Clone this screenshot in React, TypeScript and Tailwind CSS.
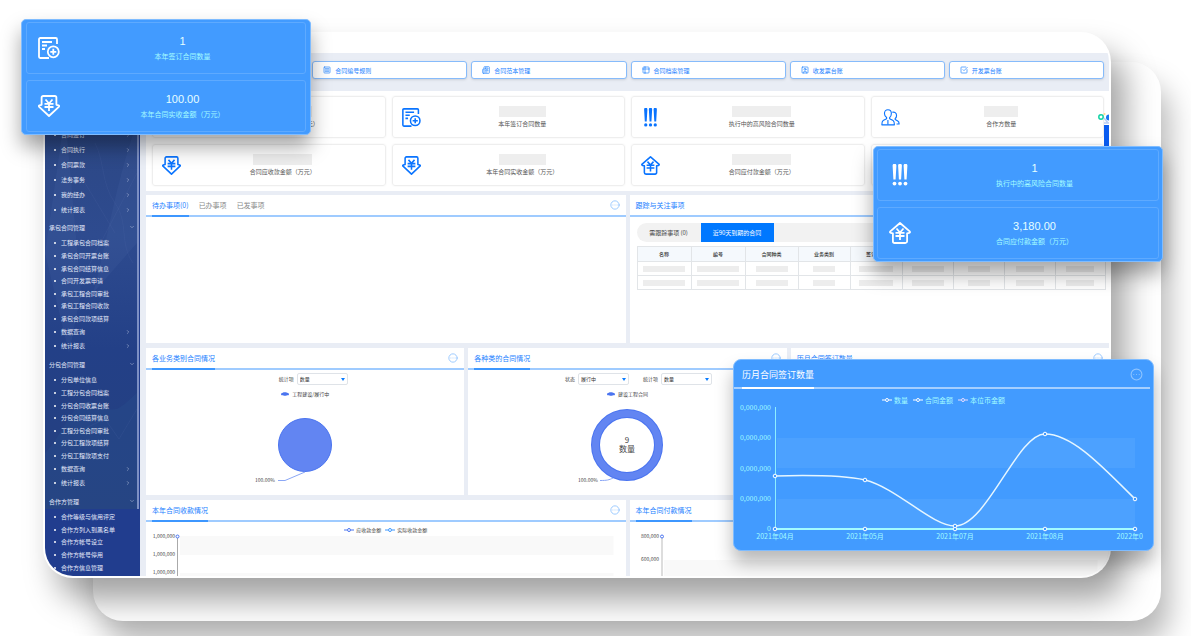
import { CircleEllipsis, ChevronDown, ChevronRight, Newspaper, SquareCheckBig, SquareMenu, SquareUser, Table2 } from 'lucide-react'
import type { ReactNode } from 'react'

type IconProps = { className?: string }

const ContractIcon = ({ className }: IconProps) => (
  <svg viewBox="0 0 22 22" fill="none" stroke="currentColor" strokeWidth="1.8" className={className}>
    <path d="M19 7V2.200A1.200 1.200 0 0 0 17.800 1H2.200A1.200 1.200 0 0 0 1 2.200v17.600A1.200 1.200 0 0 0 2.200 21H11" />
    <path d="M4 5h10M4 8.500h5M4 12h3" />
    <circle cx="15.300" cy="14.800" r="5.500" />
    <path d="M12.300 14.800h6M15.300 11.800v6" />
  </svg>
)

const IncomeIcon = ({ className }: IconProps) => (
  <svg viewBox="0 0 22 22" fill="none" stroke="currentColor" strokeWidth="1.800" strokeLinejoin="round" className={className}>
    <path d="M5.200 1h11.600a1.600 1.600 0 0 1 1.600 1.600v7.200l2.200.5c.7.3.7 1 .2 1.500L11 21 1.200 11.800c-.5-.5-.5-1.200.2-1.500l2.200-.5V2.600A1.600 1.600 0 0 1 5.200 1z" />
    <path d="M7.500 4.500 11 8.500l3.500-4M6.500 8.800h9M6.500 12h9M11 8.500v7.500" />
  </svg>
)

const OutcomeIcon = ({ className }: IconProps) => (
  <svg viewBox="0 0 22 22" fill="none" stroke="currentColor" strokeWidth="1.800" strokeLinejoin="round" className={className}>
    <path d="M11 1 1.300 9.400c-.6.6-.4 1.400.4 1.500l2.200.4v7.900A1.800 1.800 0 0 0 5.700 21h10.600a1.800 1.800 0 0 0 1.800-1.800v-7.900l2.200-.4c.8-.1 1-.9.4-1.500z" />
    <path d="M7.500 6.500 11 10.500l3.500-4M6.500 10.800h9M6.500 14h9M11 10.500v7.500" />
  </svg>
)

const RiskIcon = ({ className }: IconProps) => (
  <svg viewBox="0 0 22 22" fill="currentColor" className={className}>
    <path d="M3.600 1.600a1.900 1.900 0 0 1 3.800 0L6.600 15.500H4.400zM9.100 1.600a1.900 1.900 0 0 1 3.800 0l-.8 13.900H9.900zM14.600 1.600a1.900 1.900 0 0 1 3.800 0l-.8 13.900h-2.200z" />
    <circle cx="5.500" cy="19.600" r="1.900" />
    <circle cx="11" cy="19.600" r="1.900" />
    <circle cx="16.500" cy="19.600" r="1.900" />
  </svg>
)

const PartnerIcon = ({ className }: IconProps) => (
  <svg viewBox="0 0 22 22" fill="none" stroke="currentColor" strokeWidth="1.300" strokeLinejoin="round" className={className}>
    <path d="M8 2c2.500 0 4 2 4 4.500 0 2-.8 3.700-2 4.500v1.500l4 2c1 .6 1.500 2 1.500 5H1c0-3 .5-4.400 1.500-5l4-2V11C5 10 4 8.500 4 6.500 4 4 5.500 2 8 2z" />
    <path d="M13 5c2.600-1 5 .8 5 3.600 0 1.600-.6 2.900-1.600 3.600v1.200l3 1.600c1.200.7 1.600 1.700 1.600 3.500h-3" />
    <path d="M8 14v5" />
  </svg>
)

const menus = [
  { title: '', items: ['合同签订', '合同执行', '合同票款', '法务事务', '我的经办', '统计报表'] },
  { title: '承包合同管理', items: ['工程承包合同档案', '承包合同开票台账', '承包合同结算信息', '合同开发票申请', '承包工程合同审批', '承包工程合同收款', '承包合同款项结算', '数据查询', '统计报表'] },
  { title: '分包合同管理', items: ['分包单位信息', '工程分包合同档案', '分包合同收票台账', '分包合同结算信息', '工程分包合同审批', '分包工程款项结算', '分包工程款项支付', '数据查询', '统计报表'] },
  { title: '合作方管理', items: ['合作等级与信用评定', '合作方列入到黑名单', '合作方帐号设立', '合作方帐号停用', '合作方信息管理'] },
]

const menuHeights = ['h-[89px]', 'h-[117px]', 'h-[117px]', 'h-[63px]']

const shortcuts = [
  { icon: SquareMenu, label: '合同编号规则' },
  { icon: Newspaper, label: '合同范本管理' },
  { icon: Table2, label: '合同档案管理' },
  { icon: SquareUser, label: '收发票台账' },
  { icon: SquareCheckBig, label: '开发票台账' },
]

const stats = [
  { icon: null, label: '本年签订合同金额（万元）', bar: 'w-[59px]' },
  { icon: ContractIcon, label: '本年签订合同数量', bar: 'w-[47px]' },
  { icon: RiskIcon, label: '执行中的高风险合同数量', bar: 'w-[59px]' },
  { icon: PartnerIcon, label: '合作方数量', bar: 'w-[34px]' },
  { icon: IncomeIcon, label: '合同应收款金额（万元）', bar: 'w-[59px]' },
  { icon: IncomeIcon, label: '本年合同实收金额（万元）', bar: 'w-[47px]' },
  { icon: OutcomeIcon, label: '合同应付款金额（万元）', bar: 'w-[59px]' },
  { icon: null, label: '', bar: 'w-0' },
]

const columns = [
  { label: '名称', col: 'w-[54px]', bar: 'w-[42px]' },
  { label: '编号', col: 'w-[54px]', bar: 'w-[42px]' },
  { label: '合同种类', col: 'w-[53px]', bar: 'w-[32px]' },
  { label: '业务类别', col: 'w-[52px]', bar: 'w-[22px]' },
  { label: '签订日期', col: 'w-[52px]', bar: 'w-[34px]' },
  { label: '', col: 'w-[51px]', bar: 'w-[32px]' },
  { label: '', col: 'w-[51px]', bar: 'w-[22px]' },
  { label: '', col: 'w-[51px]', bar: 'w-[28px]' },
  { label: '', col: 'w-[50px]', bar: 'w-[28px]' },
]

const Sidebar = () => (
  <nav className="flex w-[95px] shrink-0 bg-[#213d8e] text-[#e4eafa]">
    <div className="relative w-[92px] overflow-hidden pt-[75px]">
      <svg className="absolute inset-x-0 top-0 h-[456px] w-full" viewBox="0 0 92 456" preserveAspectRatio="none">
        <defs>
          <linearGradient id="side" x1="0" y1="0" x2="0" y2="1">
            <stop offset="0.15" stopColor="#2c4784" />
            <stop offset="0.4" stopColor="#2e4b8f" />
            <stop offset="0.65" stopColor="#234087" />
            <stop offset="1" stopColor="#25407f" />
          </linearGradient>
        </defs>
        <rect width="92" height="456" fill="url(#side)" />
        <path d="M92 70C70 130 60 200 48 240L92 190zM20 60l16 180-12 60L0 200z" fill="#4763a3" opacity=".2" />
        <path d="M0 400c20-20 30-60 50-50s20 10 42-10v116H0z" fill="#2c5a94" opacity=".2" />
        <path d="M50 90c10 20 6 40 20 60s4 40 18 60M40 130l30 50M92 120L40 220M30 380l30-14 14 20 18-30" stroke="#6d86bd" strokeWidth=".5" fill="none" opacity=".2" />
      </svg>
      {menus.map((menu, i) => (
        <div key={i} className="relative">
          {menu.title && (
            <button className="flex h-[20px] w-full items-center justify-between pr-[2px] pl-[4px] text-[6px]">
              {menu.title}
              <ChevronDown size={6} strokeWidth={1.5} />
            </button>
          )}
          <ul className={`flex flex-col ${menuHeights[i]}`}>
            {menu.items.map((item, n) => (
              <li key={item} className={`flex items-center ${n === 8 ? 'h-[16px]' : 'flex-1'}`}>
                <a href="#" className="flex w-full items-center pr-[6px] pl-[9px] text-[6px] leading-[8px]">
                  <span className="mr-[5px] size-[2px] rounded-full bg-white" />
                  {item}
                  {item.length === 4 && <ChevronRight size={6} strokeWidth={1.5} className="ml-auto" />}
                </a>
              </li>
            ))}
          </ul>
        </div>
      ))}
    </div>
    <div className="h-[456px] w-[2px] bg-[#7d90c4]" />
  </nav>
)

const MoreButton = () => (
  <button aria-label="更多" className="ml-auto text-[#8cc2ff]">
    <CircleEllipsis size={10} strokeWidth={2} />
  </button>
)

type PanelProps = { title?: string; tabs?: ReactNode; className?: string; children?: ReactNode }

const Panel = ({ title, tabs, className, children }: PanelProps) => (
  <section className={`min-w-0 overflow-hidden bg-white ${className}`}>
    <header className="flex h-[22px] items-center border-b-2 border-[#9fcbff] px-[6px] text-[7px] text-[#1a80ff]">
      {tabs ?? <h2 className="-mb-[2px] flex h-[22px] items-center border-b-2 border-[#3d97ff]">{title}</h2>}
      <MoreButton />
    </header>
    {children}
  </section>
)

const Select = ({ label, value }: { label: string; value: string }) => (
  <label className="flex items-center gap-[3px] text-[5px] text-[#444]">
    {label}
    <span className="relative">
      <select className="block h-[12px] w-[51px] appearance-none rounded-[2px] border border-[#dfe3e8] bg-white pl-[2px] text-[5px] leading-[10px] text-[#333]">
        <option>{value}</option>
      </select>
      <span className="absolute top-[5px] right-[3px] border-x-2 border-t-[3px] border-x-transparent border-t-[#0a7cff]" />
    </span>
  </label>
)

const PieLegend = ({ children }: { children: ReactNode }) => (
  <p className="mt-[4px] flex h-[10px] items-center justify-center gap-[3px] text-[5px] text-[#444]">
    <svg width="8" height="4" viewBox="0 0 8 4" fill="#4a74f0">
      <path d="M0 2.200C0 1.200 1 1 1.800.8 2.400 0 5.600 0 6.200.8 7 1 8 1.200 8 2.200S7 3.400 6 3.300C5 4 3 4 2 3.300 1 3.400 0 3.200 0 2.200z" />
    </svg>
    {children}
  </p>
)

const LineLegend = ({ color, label }: { color: string; label: string }) => (
  <span className="flex items-center gap-[2px]">
    <svg width="10" height="4" viewBox="0 0 10 4" fill="none" stroke={color}>
      <path d="M0 2h3M7 2h3" />
      <circle cx="5" cy="2" r="1.5" />
    </svg>
    {label}
  </span>
)

const TodoTabs = () => (
  <div className="-mb-[2px] flex h-[22px] gap-[10px] text-[#888]">
    <button className="border-b-2 border-[#3d97ff] text-[#1a80ff]">待办事项(0)</button>
    <button className="border-b-2 border-transparent">已办事项</button>
    <button className="border-b-2 border-transparent">已发事项</button>
  </div>
)

const FollowTable = () => (
  <div className="pt-[6px] pr-[5px] pl-[7px]">
    <div className="flex h-[19px] overflow-hidden rounded-l-full bg-[#f2f2f2] text-[6px]">
      <button className="w-[64px] text-[#444]">需跟踪事项 (0)</button>
      <button className="w-[73px] bg-[#0078ff] text-white">近90天到期的合同</button>
    </div>
    <table className="mt-[4px] w-full table-fixed border-collapse text-[5px] text-[#333]">
      <thead>
        <tr className="h-[15px] bg-[#f5f9fd]">
          {columns.map((c, i) => (
            <th key={i} className={`border border-[#e2e5e8] p-0 leading-[8px] font-medium ${c.col}`}>{c.label}</th>
          ))}
        </tr>
      </thead>
      <tbody>
        {[0, 1].map((row) => (
          <tr key={row} className="h-[14px]">
            {columns.map((c, i) => (
              <td key={i} className="border border-[#e2e5e8] p-0">
                <div className={`mx-auto h-[6px] bg-[#ededed] ${c.bar}`} />
              </td>
            ))}
          </tr>
        ))}
      </tbody>
    </table>
  </div>
)

const Dashboard = () => (
  <main className="relative min-w-0 flex-1 bg-[#e9edf5] pl-[6px]">
    <div className="grid grid-cols-6 gap-[4px] pt-[8px] pr-[5px] pb-[12px] pl-[7px]">
      {shortcuts.map(({ icon: Icon, label }) => (
        <button key={label} className="flex h-[18px] items-center gap-[4px] rounded-[3px] border border-[#86bbfb] bg-white pl-[10px] text-[6px] text-[#1a80ff] shadow-sm first:col-start-2">
          <Icon size={8} strokeWidth={2} />
          {label}
        </button>
      ))}
    </div>

    <div className="grid grid-cols-4 gap-[6px] bg-white py-[5px] pr-[5px] pl-[6px]">
      {stats.map(({ icon: Icon, label, bar }, i) => (
        <div key={i} className="flex h-[42px] items-center rounded-[3px] border border-[#eeeeee] shadow-[0_0_2px_#f0f0f0]">
          <div className="ml-[9px] w-[19px] text-[#0a74ff]">{Icon && <Icon className="size-[19px]" />}</div>
          <div className="flex flex-1 flex-col items-center gap-[2px]">
            <div className={`h-[11px] bg-[#eeeeee] ${bar}`} />
            <p className="text-[6px] leading-[10px] text-[#555]">{label}</p>
          </div>
        </div>
      ))}
    </div>

    <div className="mt-[4px] grid grid-cols-2 gap-[4px]">
      <Panel tabs={<TodoTabs />} className="h-[148px]" />
      <Panel tabs={<h2>跟踪与关注事项</h2>} className="h-[148px]">
        <FollowTable />
      </Panel>
    </div>

    <div className="mt-[5px] grid grid-cols-3 gap-[4px]">
      <Panel title="各业务类别合同情况" className="h-[147px]">
        <div className="flex justify-center pt-[3px] pl-[16px]">
          <Select label="统计项" value="数量" />
        </div>
        <PieLegend>工程建设/履行中</PieLegend>
        <svg width="120" height="90" viewBox="0 0 120 90" className="mx-auto">
          <circle cx="60" cy="46" r="26.5" fill="#6285f2" stroke="#4a74f0" />
          <path d="M60 73 40 81.5h-7" fill="none" stroke="#8ba7f5" />
          <text x="10" y="83" fontSize="5" fill="#444">100.00%</text>
        </svg>
      </Panel>
      <Panel title="各种类的合同情况" className="h-[147px]">
        <div className="flex justify-center gap-[14px] pt-[3px] pl-[22px]">
          <Select label="状态" value="履行中" />
          <Select label="统计项" value="数量" />
        </div>
        <PieLegend>建设工程合同</PieLegend>
        <svg width="120" height="90" viewBox="0 0 120 90" className="mx-auto">
          <circle cx="60" cy="46" r="31.5" fill="none" stroke="#4a74f0" strokeWidth="9" />
          <circle cx="60" cy="46" r="31.5" fill="none" stroke="#6285f2" strokeWidth="7" />
          <text x="60" y="44" fontSize="8" textAnchor="middle" fill="#444">9</text>
          <text x="60" y="53" fontSize="8" textAnchor="middle" fill="#444">数量</text>
          <path d="M46 79c-4 2-6 2.5-13 2.5" fill="none" stroke="#8ba7f5" />
          <text x="11" y="83" fontSize="5" fill="#444">100.00%</text>
        </svg>
      </Panel>
      <Panel title="历月合同签订数量" className="h-[147px]" />
    </div>

    <div className="mt-[5px] grid grid-cols-2 gap-[4px]">
      <Panel title="本年合同收款情况" className="h-[76px]">
        <div className="flex h-[14px] items-center justify-center gap-[4px] pt-[2px] text-[5px] text-[#444]">
          <LineLegend color="#4a74f0" label="应收款金额" />
          <LineLegend color="#3d97ff" label="实际收款金额" />
        </div>
        <svg className="h-[40px] w-full overflow-visible" fontSize="5" fill="#444" textAnchor="end">
          <rect x="34" width="90.4%" height="19" fill="#f9f9f9" />
          <rect x="34" y="37" width="90.4%" height="3" fill="#f9f9f9" />
          <path d="M31.5 0v40" stroke="#aaa" />
          <circle cx="31.5" cy="0.5" r="1.5" fill="#fff" stroke="#4a74f0" />
          <text x="29" y="2">1,000,000</text>
          <text x="29" y="20">1,000,000</text>
          <text x="29" y="38">1,000,000</text>
        </svg>
      </Panel>
      <Panel title="本年合同付款情况" className="h-[76px]">
        <svg className="mt-[14px] h-[40px] w-full overflow-visible" fontSize="5" fill="#444" textAnchor="end">
          <rect x="34" y="24" width="90.4%" height="16" fill="#f9f9f9" />
          <path d="M32 0v40" stroke="#bbb" />
          <circle cx="32" cy="0.5" r="1.5" fill="#fff" stroke="#4a74f0" />
          <text x="29" y="2">800,000</text>
          <text x="29" y="25">600,000</text>
        </svg>
      </Panel>
    </div>

    <div className="absolute top-[60px] right-0 flex w-[11px] flex-col items-end">
      <svg width="11" height="12" viewBox="0 0 11 12" fill="none">
        <circle cx="3" cy="4" r="2.2" stroke="#12d3a5" strokeWidth="1.5" />
        <circle cx="6.5" cy="1" r="1" fill="#ffd98a" />
        <path d="M11 1.500a3 3 0 0 0 0 6z" fill="#1877f2" />
        <path d="M6 5l4 5M6 10h5" stroke="#b9cdf5" strokeWidth="1.500" />
      </svg>
      <div className="h-[60px] w-[5px] bg-[#0a5cf0]" />
    </div>
  </main>
)

const SummaryCard = ({ icon, value, label }: { icon: ReactNode; value: string; label: string }) => (
  <div className="flex h-[52px] items-center rounded-[3px] border border-[#5eaaff] pl-[11px]">
    {icon}
    <div className="flex-1 text-center">
      <p className="font-['Liberation_Sans',sans-serif] text-[11px] leading-[16px] text-[#e6ffff]">{value}</p>
      <p className="text-[7px] leading-[14px] text-[#a4fbff]">{label}</p>
    </div>
  </div>
)

const points = [
  [33, 75],
  [123, 79],
  [213, 125],
  [303, 33],
  [393, 98],
]
const months = ['2021年04月', '2021年05月', '2021年07月', '2021年08月']

const TrendCard = () => (
  <section className="absolute top-[359px] right-[37px] h-[192px] w-[421px] rounded-[8px] border border-[#7fbcff] bg-[#429bff] shadow-[0_12px_18px_rgba(0,0,0,0.28)]">
    <header className="mr-[3px] flex h-[29px] items-center border-b-2 border-[#a5cfff] pt-[2px] pr-[7px] pl-[8px] text-[9px] text-white">
      <h2 className="-mb-[2px] flex h-[27px] items-center border-b-2 border-white">历月合同签订数量</h2>
      <button aria-label="更多" className="ml-auto text-[#8ec4ff]">
        <CircleEllipsis size={13} strokeWidth={2} />
      </button>
    </header>
    <div className="flex justify-center gap-[5px] pt-[6px] text-[7px] leading-[10px] text-[#a4fbff]">
      <LineLegend color="#fff" label="数量" />
      <LineLegend color="#fff" label="合同金额" />
      <LineLegend color="#e8dcff" label="本位币金额" />
    </div>
    <svg width="401" height="144" viewBox="0 0 401 144" className="-mt-[4px] ml-[8px] overflow-visible" fontSize="7" fill="#a4fbff">
      <rect x="35" y="37" width="358" height="30" fill="#4ca1ff" />
      <rect x="35" y="98" width="358" height="30" fill="#4ca1ff" />
      <path d="M33.500 6v122" stroke="#8deeff" />
      <path d="M33 128h360" stroke="#a4fbff" strokeWidth="2" />
      <path d="M33 75C70 74 100 74 123 79C155 87 190 125 213 125C245 125 275 33 303 33C330 33 360 65 393 98" fill="none" stroke="#e6f6ff" strokeWidth="1.500" />
      {points.map(([x, y]) => (
        <g key={x} fill="#429bff" stroke="#fff">
          <circle cx={x} cy="128" r="1.800" />
          <circle cx={x} cy={y} r="1.800" />
        </g>
      ))}
      {[9, 39, 70, 100].map((y) => (
        <text key={y} x="29" y={y} textAnchor="end">0,000,000</text>
      ))}
      <text x="29" y="130" textAnchor="end">0</text>
      {months.map((month, i) => (
        <text key={month} x={points[i][0]} y="138" textAnchor="middle">{month}</text>
      ))}
      <text x="401" y="138" textAnchor="end">2022年0</text>
    </svg>
  </section>
)

const App = () => (
  <div className="relative overflow-hidden bg-white pt-[32px] pb-[58px] font-['Noto_Sans_CJK_SC',sans-serif]">
    <div className="absolute top-[62px] right-[30px] bottom-[15px] left-[93px] rounded-[30px] bg-white shadow-[8px_22px_30px_rgba(0,0,0,0.29)]" />
    <div className="relative mr-[80px] ml-[43px] overflow-hidden rounded-[30px] border-2 border-t-0 border-white bg-white shadow-[14px_22px_32px_rgba(0,0,0,0.37)]">
      <div className="h-[21px]" />
      <div className="flex h-[523px]">
        <Sidebar />
        <Dashboard />
      </div>
    </div>

    <section className="absolute top-[19px] left-[21px] flex w-[290px] flex-col gap-[6px] rounded-[5px] border border-[#7fbcff] bg-[#429bff] px-[4px] py-[2px] shadow-[0_12px_20px_rgba(0,0,0,0.35)]">
      <SummaryCard icon={<ContractIcon className="size-[22px] text-white" />} value="1" label="本年签订合同数量" />
      <SummaryCard icon={<IncomeIcon className="size-[22px] text-white" />} value="100.00" label="本年合同实收金额（万元）" />
    </section>
    <section className="absolute top-[146px] right-[28px] flex w-[290px] flex-col gap-[6px] rounded-[5px] border border-[#7fbcff] bg-[#429bff] px-[3px] py-[2px] shadow-[0_12px_20px_rgba(0,0,0,0.35)]">
      <SummaryCard icon={<RiskIcon className="size-[22px] text-white" />} value="1" label="执行中的高风险合同数量" />
      <SummaryCard icon={<OutcomeIcon className="size-[22px] text-white" />} value="3,180.00" label="合同应付款金额（万元）" />
    </section>
    <TrendCard />
  </div>
)

export default App
